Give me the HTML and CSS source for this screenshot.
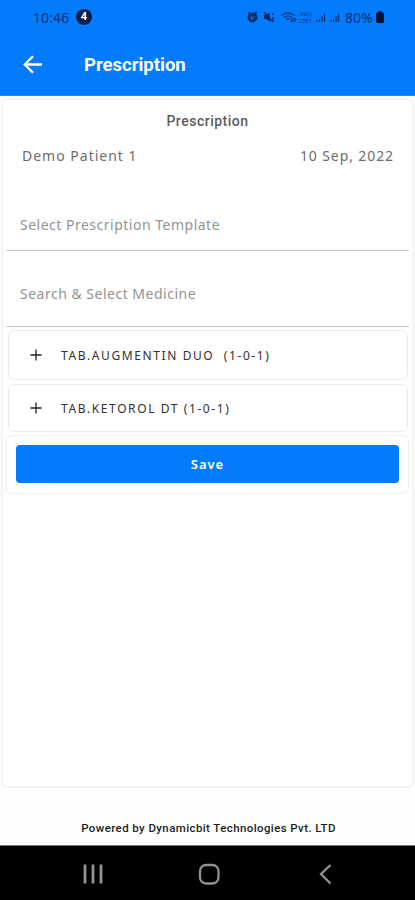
FILE: index.html
```html
<!DOCTYPE html>
<html lang="en">
<head>
<meta charset="utf-8">
<title>Prescription</title>
<link rel="stylesheet" href="styles.css">
</head>
<body>
<header class="top">
  <div class="status">
    <span class="clock">10:46</span><span class="count">4</span>
    <svg class="signals" width="96" height="16" viewBox="0 0 96 16" fill="none" stroke="currentColor">
      <path d="M2.500 4.500 4 3.500M10.500 4.500 9 3.500" stroke-width="2.200"/>
      <circle cx="6.500" cy="8.500" r="3.500" stroke-width="2.800"/>
      <path d="M6.500 6.500v2.200H9" stroke-width="1"/>
      <path d="M18 6h2.500L24 3v10l-3.500-3H18z" fill="currentColor" stroke="none"/>
      <path d="M18 3l9 10" stroke-width="1.300"/>
      <path d="M27 4v2M27 8v4" stroke-width="1.500"/>
      <path d="M35.500 6.500q6.500-5.500 13 0M38 8.500q4-3.500 8 0M40.500 10.500q1.500-1.500 3 0" stroke-width="1.200"/>
      <path d="M46 9v4m-1.500-1.500L46 13l1.500-1.500M49 13V9m-1.500 1.500L49 9l1.500 1.500" stroke-width="1"/>
      <text class="tiny" x="54" y="7">Vo))</text>
      <text class="tiny" x="53" y="14">LTE1</text>
      <path d="M71 13v-2M73.500 13v-3M76 13V7M78.500 13V5" stroke-width="1.200"/>
      <path d="M85 13v-2M87.500 13v-3M90 13V7M92.500 13V5" stroke-width="1.200"/>
    </svg>
    <span class="percent">80%</span>
    <svg class="battery" width="8" height="12" viewBox="0 0 8 12"><path d="M2.500 0h3v1.500H7q1 0 1 1V11q0 1-1 1H1q-1 0-1-1V2.500q0-1 1-1h1.500z" fill="currentColor"/></svg>
  </div>
  <div class="appbar">
    <svg class="back" width="20" height="20" viewBox="0 0 20 20" fill="none" stroke="#fff" stroke-width="2.300"><path d="M19 9.500H2M10 1.300 1.800 9.500l8.200 8.200"/></svg>
    <h1 class="title">Prescription</h1>
  </div>
</header>
<main class="sheet">
  <h2 class="heading">Prescription</h2>
  <div class="patient"><span class="name">Demo Patient 1</span><span class="date">10 Sep, 2022</span></div>
  <div class="field template"><span class="ph1">Select Prescription Template</span></div>
  <div class="field medicine"><span class="ph2">Search &amp; Select Medicine</span></div>
  <div class="row"><svg class="plus" width="12" height="12" viewBox="0 0 12 12"><path d="M6 .5v11M.5 6h11" stroke="#222" stroke-width="1.300"/></svg><span class="med">TAB.AUGMENTIN DUO&nbsp; (1-0-1)</span></div>
  <div class="row last"><svg class="plus" width="12" height="12" viewBox="0 0 12 12"><path d="M6 .5v11M.5 6h11" stroke="#222" stroke-width="1.300"/></svg><span class="med">TAB.KETOROL DT (1-0-1)</span></div>
  <div class="actions"><button class="save">Save</button></div>
</main>
<footer class="powered"><span>Powered by Dynamicbit Technologies Pvt. LTD</span></footer>
<nav class="nav">
  <svg width="415" height="54" viewBox="0 0 415 54" fill="none" stroke="#929292" stroke-width="2.300">
    <path d="M85 18.500v19M93 18.500v19M101 18.500v19" stroke-width="2.800"/>
    <rect x="200" y="19" width="18.500" height="18.500" rx="6"/>
    <path d="M330.500 19 321 28l9.500 9.500"/>
  </svg>
</nav>
</body>
</html>
```
FILE: styles.css
```css
* { box-sizing: border-box; }
body {
  margin: 0;
  height: 900px;
  display: flex;
  flex-direction: column;
  background: #fefefe;
  font-family: "Noto Sans", sans-serif;
  overflow: hidden;
}
.top { height: 96px; background: #037bff; flex: none; border-bottom: 1px solid #2688f5; }
.status { height: 34px; display: flex; align-items: center; padding-left: 33px; color: #053070; }
.clock { width: 43px; font-size: 14px; letter-spacing: .1px; }
.count {
  width: 16px; height: 16px; border-radius: 50%;
  background: #061f49; color: #fff;
  font: bold 11px/16px Roboto, sans-serif; text-align: center;
}
.signals { margin-left: 154px; color: #052b60; flex: none; }
.tiny { font: 5.500px Roboto, sans-serif; letter-spacing: .4px; fill: currentColor; stroke: none; }
.percent { width: 31px; margin-left: 3px; font-size: 14px; letter-spacing: .1px; }
.battery { color: #03152f; flex: none; }
.appbar { height: 61px; display: flex; align-items: center; padding-left: 23px; }
.title { margin: 0 0 0 41px; color: #fff; font: bold 18.500px/24px Roboto, sans-serif; }
.sheet {
  height: 690px; margin: 2px 1px 0; flex: none;
  border: 2px solid #f3f3f4; border-radius: 6px; background: #fff;
  padding: 0 3px;
}
.heading { margin: 0; padding-top: 11px; text-align: center; font: 500 14px/20px Roboto, sans-serif; color: #5c5c5c; letter-spacing: .5px; }
.patient { display: flex; justify-content: space-between; padding: 15px 15px 0 16px; font-size: 14px; line-height: 20px; color: #6c6c6c; }
.name { letter-spacing: 1px; }
.date { letter-spacing: .9px; }
.field { padding-left: 14px; border-bottom: 1px solid #c6c8c8; font-size: 14px; line-height: 20px; color: #939393; letter-spacing: .5px; }
.template { height: 85px; padding-top: 49px; }
.medicine { height: 76px; padding-top: 33px; }
.row {
  height: 50px; margin: 3px 1px 4px 2px;
  display: flex; align-items: center; gap: 19px; padding-left: 21px;
  border: 1px solid #e9ebeb; border-radius: 6px;
  font-size: 12px; color: #303030; white-space: nowrap;
}
.last { height: 48px; }
.med { letter-spacing: 1.600px; }
.actions { height: 59px; margin-top: -1px; padding: 9px 9px; border: 1px solid #eef0f0; border-radius: 6px; }
.save {
  display: block; width: 100%; height: 38px; padding: 0; border: 0; border-radius: 4px;
  background: #037bff; color: #fff; font: 600 13px "Noto Sans", sans-serif; letter-spacing: 1px;
}
.powered { height: 57px; flex: none; text-align: center; padding: 31px 0 0 2px; font: 500 11.500px/18px Roboto, sans-serif; color: #1d1d1d; letter-spacing: .4px; }
.nav { height: 55px; flex: none; background: #000; border-top: 1px solid #777; }
.nav svg { display: block; }
```
